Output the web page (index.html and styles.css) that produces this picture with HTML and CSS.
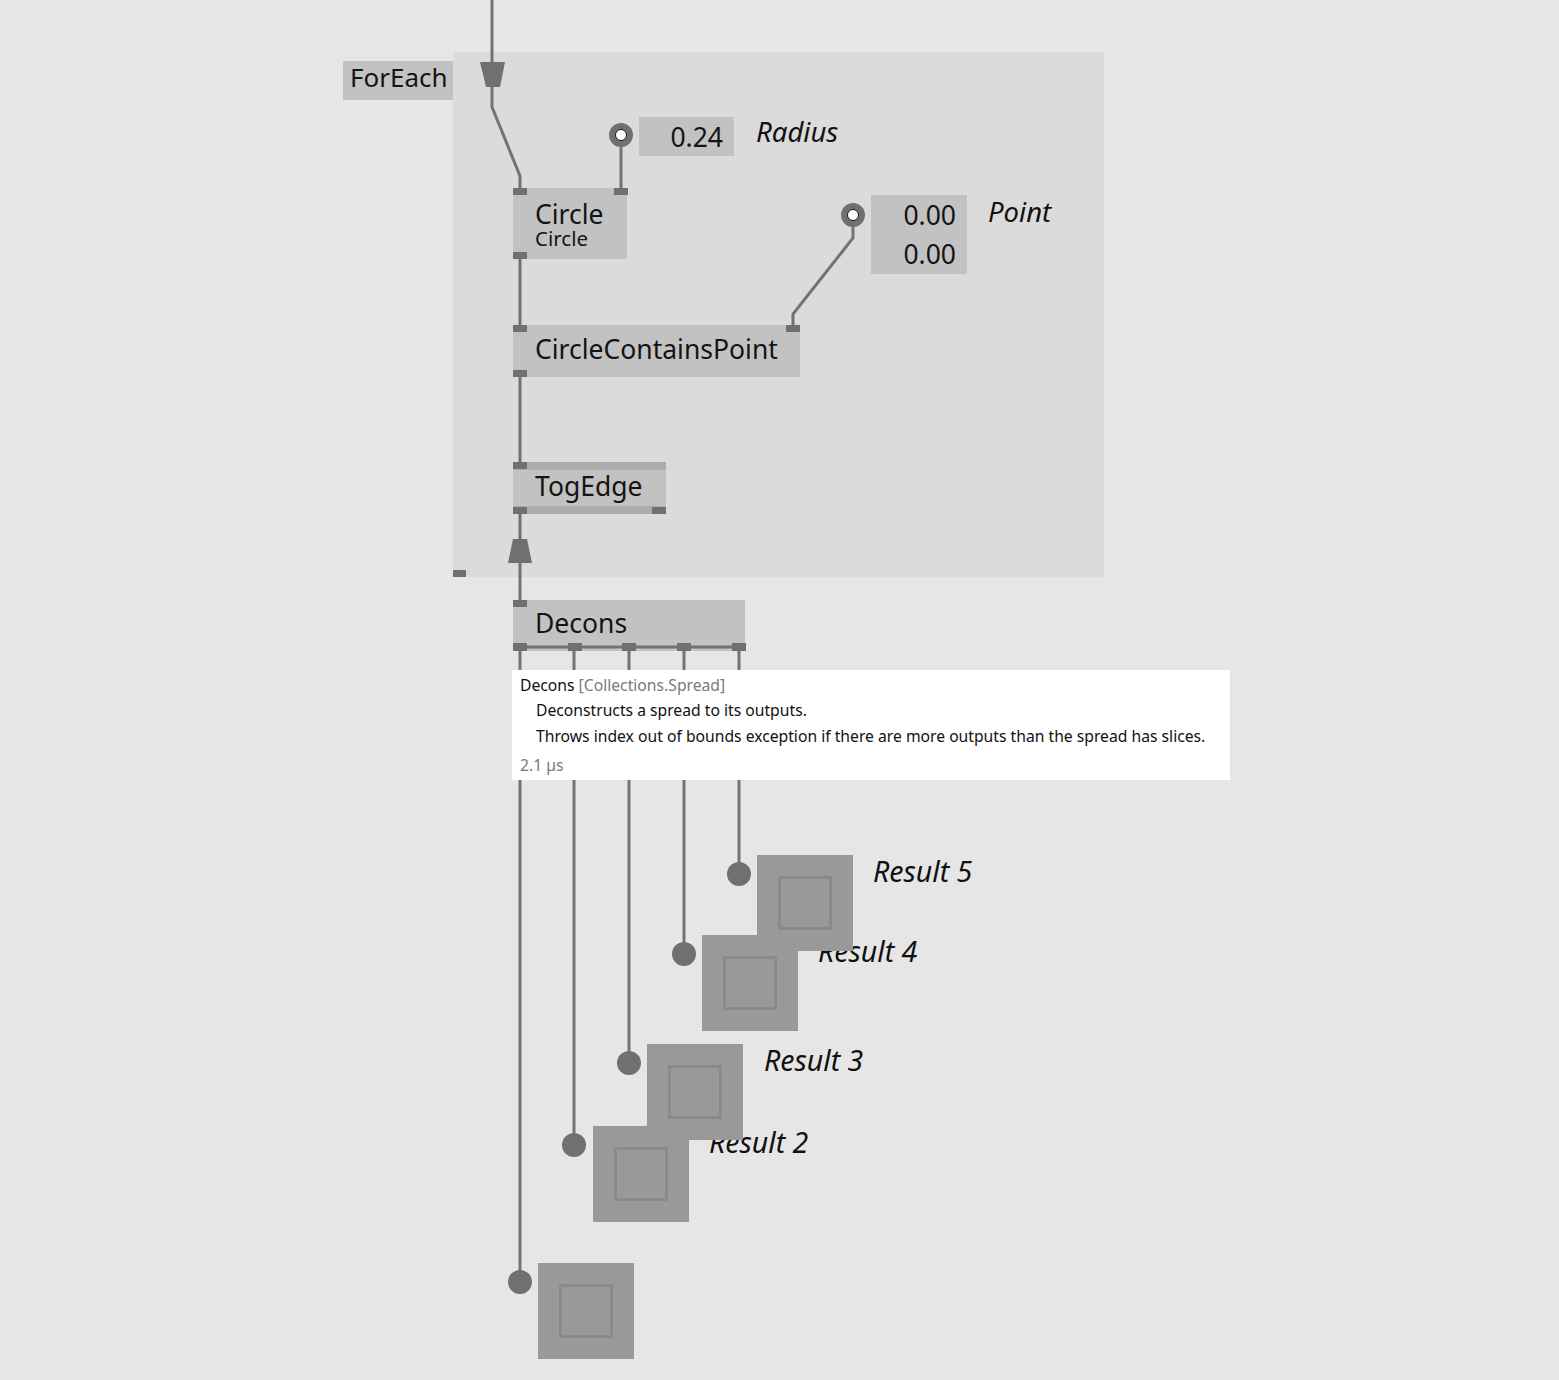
FILE: index.html
```html
<!DOCTYPE html>
<html lang="en">
  <head>
    <meta charset="UTF-8" />
    <title>Patch - ForEach</title>
    <link rel="stylesheet" href="styles.css">
  </head>
  <body>
    <div class="canvas">
      <div class="region"></div>
      <div class="node foreach-label">ForEach</div>

      <div class="node circle-node">
        <div class="title">Circle</div>
        <div class="subtitle">Circle</div>
      </div>
      <div class="node contains-node"><div class="title">CircleContainsPoint</div></div>
      <div class="node togedge-node"><div class="title">TogEdge</div></div>
      <div class="node decons-node"><div class="title">Decons</div></div>

      <div class="iobox radius-box">0.24</div>
      <div class="iobox point-box"><span>0.00</span><span>0.00</span></div>
      <div class="label radius-label">Radius</div>
      <div class="label point-label">Point</div>

      <div class="label result-label r2">Result 2</div>
      <div class="label result-label r3">Result 3</div>
      <div class="label result-label r4">Result 4</div>
      <div class="label result-label r5">Result 5</div>

      <svg class="wires" width="1559" height="1380" viewBox="0 0 1559 1380">
        <g fill="none" stroke="#737373" stroke-width="3">
          <path d="M492 0 V107 L520 176 V190" />
          <path d="M621 147 V190" />
          <path d="M520 259 V327" />
          <path d="M853 227 V238 L793 314 V327" />
          <path d="M520 377 V464" />
          <path d="M520 514 V602" />
          <path d="M520 647 H739" />
          <path d="M520 647 V1282" />
          <path d="M574 647 V1145" />
          <path d="M629 647 V1063" />
          <path d="M684 647 V954" />
          <path d="M739 647 V874" />
        </g>
        <g fill="#707070">
          <polygon points="480,62 505,62 500,87 486,87" />
          <polygon points="513,539 527,539 532,563 508,563" />
          <rect x="453" y="570" width="13" height="7" />

          <rect x="513" y="188" width="14" height="7" />
          <rect x="614" y="188" width="14" height="7" />
          <rect x="513" y="252" width="14" height="7" />
          <rect x="513" y="325" width="14" height="7" />
          <rect x="786" y="325" width="14" height="7" />
          <rect x="513" y="370" width="14" height="7" />
          <rect x="513" y="462" width="14" height="7" />
          <rect x="513" y="507" width="14" height="7" />
          <rect x="652" y="507" width="14" height="7" />
          <rect x="513" y="600" width="14" height="7" />

          <rect x="513" y="643" width="14" height="8" />
          <rect x="568" y="643" width="14" height="8" />
          <rect x="622" y="643" width="14" height="8" />
          <rect x="677" y="643" width="14" height="8" />
          <rect x="732" y="643" width="14" height="8" />

          <circle cx="621" cy="135" r="12" />
          <circle cx="853" cy="215" r="12" />
          <circle cx="739" cy="874" r="12" />
          <circle cx="684" cy="954" r="12" />
          <circle cx="629" cy="1063" r="12" />
          <circle cx="574" cy="1145" r="12" />
          <circle cx="520" cy="1282" r="12" />
        </g>
        <g fill="#ffffff" stroke="#1a1a1a" stroke-width="1">
          <circle cx="621" cy="135" r="5.5" />
          <circle cx="853" cy="215" r="5.5" />
        </g>
      </svg>

      <div class="renderer b1"><div class="inner"></div></div>
      <div class="renderer b2"><div class="inner"></div></div>
      <div class="renderer b3"><div class="inner"></div></div>
      <div class="renderer b4"><div class="inner"></div></div>
      <div class="renderer b5"><div class="inner"></div></div>

      <div class="tooltip">
        <div class="tip-head">Decons <span class="category">[Collections.Spread]</span></div>
        <div class="tip-line">Deconstructs a spread to its outputs.</div>
        <div class="tip-line">Throws index out of bounds exception if there are more outputs than the spread has slices.</div>
        <div class="tip-time">2.1 µs</div>
      </div>
    </div>
  </body>
</html>
```

FILE: styles.css
```css
body {
  margin: 0;
  background-color: #e6e6e6;
  font-family: "Noto Sans", "Open Sans", sans-serif;
  color: #141414;
}

.canvas {
  position: relative;
  width: 1559px;
  height: 1380px;
  overflow: hidden;
}

.region {
  position: absolute;
  left: 453px;
  top: 52px;
  width: 651px;
  height: 525px;
  background-color: #dbdbdb;
}

.wires {
  position: absolute;
  left: 0;
  top: 0;
}

/* nodes */

.node {
  position: absolute;
  background-color: #c2c2c2;
  box-sizing: border-box;
  padding-left: 22px;
  font-size: 26.5px;
}

.node .title {
  line-height: 30px;
}

.node .subtitle {
  font-size: 20.5px;
  line-height: 22px;
}

.foreach-label {
  left: 343px;
  top: 61px;
  width: 110px;
  height: 39px;
  padding-left: 7px;
  font-size: 26px;
  line-height: 33px;
}

.circle-node {
  left: 513px;
  top: 188px;
  width: 114px;
  height: 71px;
  padding-top: 13px;
}

.circle-node .title {
  line-height: 26px;
}

.contains-node {
  left: 513px;
  top: 325px;
  width: 287px;
  height: 52px;
  padding-top: 9px;
}

.togedge-node {
  left: 513px;
  top: 462px;
  width: 153px;
  height: 52px;
  padding-top: 8px;
  border-top: 8px solid #adadad;
  border-bottom: 8px solid #adadad;
}

.togedge-node .title {
  margin-top: -7px;
}

.decons-node {
  left: 513px;
  top: 600px;
  width: 232px;
  height: 51px;
  padding-top: 8px;
}

/* value boxes */

.iobox {
  position: absolute;
  background-color: #c2c2c2;
  box-sizing: border-box;
  text-align: right;
  padding-right: 11px;
  font-size: 26.5px;
}

.radius-box {
  left: 639px;
  top: 117px;
  width: 95px;
  height: 39px;
  line-height: 40px;
}

.point-box {
  left: 871px;
  top: 195px;
  width: 96px;
  height: 79px;
  display: flex;
  flex-direction: column;
  padding-top: 1px;
}

.point-box span {
  line-height: 39px;
}

.label {
  position: absolute;
  font-style: italic;
  font-size: 27.5px;
  line-height: 30px;
  color: #111;
}

.radius-label { left: 756px; top: 117px; }
.point-label { left: 988px; top: 197px; }
.result-label { font-size: 28.5px; }
.result-label.r5 { left: 873px; top: 856px; }
.result-label.r4 { left: 818px; top: 936px; }
.result-label.r3 { left: 764px; top: 1045px; }
.result-label.r2 { left: 709px; top: 1127px; }

/* renderers */

.renderer {
  position: absolute;
  width: 96px;
  height: 96px;
  background-color: #999999;
  box-sizing: border-box;
  padding: 21px;
}

.renderer .inner {
  width: 100%;
  height: 100%;
  box-sizing: border-box;
  border: 3px solid #8a8a8a;
}

.b1 { left: 538px; top: 1263px; }
.b2 { left: 593px; top: 1126px; }
.b3 { left: 647px; top: 1044px; }
.b4 { left: 702px; top: 935px; }
.b5 { left: 757px; top: 855px; }

/* tooltip */

.tooltip {
  position: absolute;
  left: 512px;
  top: 670px;
  width: 718px;
  height: 110px;
  box-sizing: border-box;
  background-color: #ffffff;
  padding: 5px 8px 0;
  font-size: 15.7px;
  line-height: 26px;
  color: #111;
}

.tip-head {
  line-height: 20px;
  margin-bottom: 2px;
}

.category,
.tip-time {
  color: #7a7a7a;
}

.tip-line {
  padding-left: 16px;
}

.tip-time {
  line-height: 32px;
}
```
